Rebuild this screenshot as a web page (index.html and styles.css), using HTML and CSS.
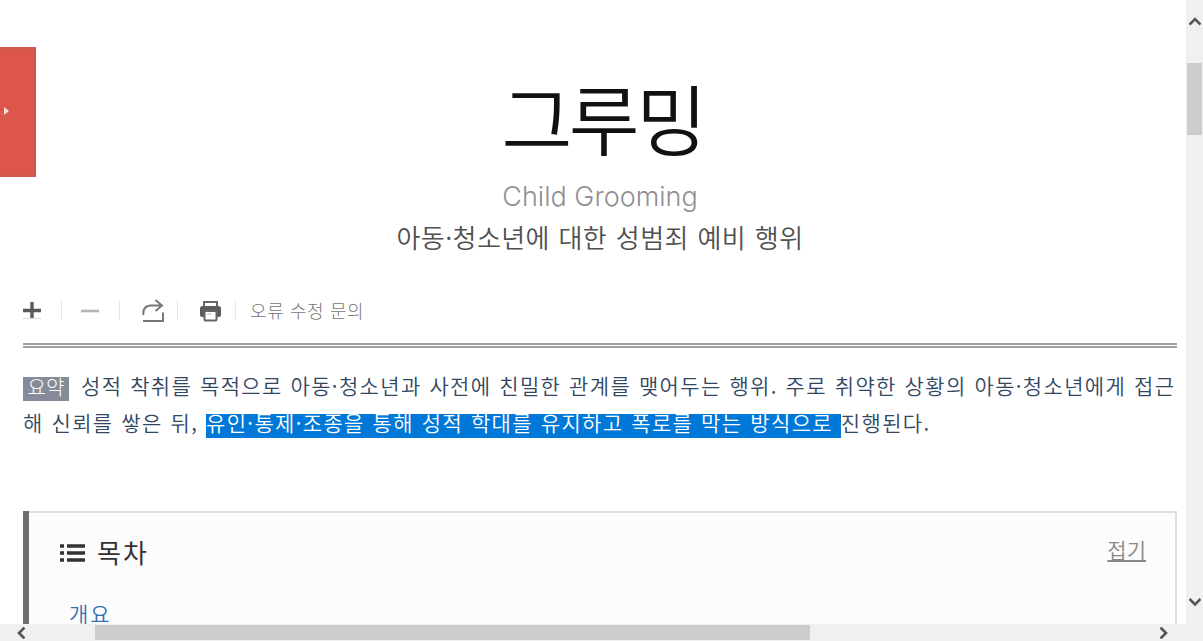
FILE: index.html
```html
<!DOCTYPE html>
<html lang="ko">
<head>
    <meta charset="UTF-8">
    <meta name="viewport" content="width=device-width, initial-scale=1.0">
    <title>그루밍</title>
    <link rel="stylesheet" href="styles.css">
</head>
<body>
    <div class="viewer">
        <main class="page">
            <button class="side-tab" aria-label="열기"></button>

            <header class="article-head">
                <h1>그루밍</h1>
                <p class="title-en">Child Grooming</p>
                <p class="title-sub">아동·청소년에 대한 성범죄 예비 행위</p>
            </header>

            <div class="toolbar">
                <span class="tool">
                    <svg width="18" height="18" viewBox="0 0 18 18"><path d="M9 0v16M0 8.500h18" stroke="#5a5a5a" stroke-width="3.4"/><path d="M0 16.500h18" stroke="#ddd"/></svg>
                </span>
                <span class="tool">
                    <svg width="18" height="18" viewBox="0 0 18 18"><path d="M0 9h18" stroke="#b5b5b5" stroke-width="2.6"/></svg>
                </span>
                <span class="tool tool-share">
                    <svg width="22" height="24" viewBox="0 0 22 24" fill="none" stroke="#777" stroke-width="2"><path d="M1.500 16C.5 10 4 6.500 9 6.500h11M13.500 1l6.500 5.500-6.500 5.500"/><path d="M1 22h20v-8.500"/></svg>
                </span>
                <span class="tool tool-print">
                    <svg width="21" height="22" viewBox="0 0 21 22"><path d="M4 7V2h13v5" fill="#fff" stroke="#666" stroke-width="2"/><rect y="6" width="21" height="11" rx="2.500" fill="#5c5c5c"/><rect x="4.500" y="11" width="12" height="9.500" rx="1" fill="#fff" stroke="#666" stroke-width="2"/><path d="M7 14h4" stroke="#bbb"/></svg>
                </span>
                <a class="report">오류 수정 문의</a>
            </div>

            <section class="summary">
                <div class="line"><span class="badge">요약</span><span class="text">성적 착취를 목적으로 아동·청소년과 사전에 친밀한 관계를 맺어두는 행위. 주로 취약한 상황의 아동·청소년에게 접근</span></div>
                <div class="line"><span class="text">해 신뢰를 쌓은 뒤, </span><mark>유인·통제·조종을 통해 성적 학대를 유지하고 폭로를 막는 방식으로 </mark><span class="text">진행된다.</span></div>
            </section>

            <nav class="toc">
                <div class="toc-head">
                    <svg width="25" height="19" viewBox="0 0 25 19"><path d="M0 2h4M0 9h4M0 16h4M7 2h18M7 9h18M7 16h18" stroke="#333" stroke-width="3.400"/></svg>
                    <h2>목차</h2>
                    <a class="fold">접기</a>
                </div>
                <a class="toc-item">개요</a>
            </nav>
        </main>

        <div class="vbar">
            <svg class="arrow-up" width="12" height="10" viewBox="0 0 12 10"><path d="M.5 8.500L6 3l5.500 5.500" fill="none" stroke="#555" stroke-width="2.600"/></svg>
            <div class="vthumb"></div>
            <svg class="arrow-down" width="12" height="10" viewBox="0 0 12 10"><path d="M.5 2L6 7.500 11.500 2" fill="none" stroke="#555" stroke-width="2.600"/></svg>
        </div>
        <div class="hbar">
            <svg class="arrow-left" width="10" height="12" viewBox="0 0 10 12"><path d="M8.500.5L3 6l5.500 5.500" fill="none" stroke="#555" stroke-width="2.600"/></svg>
            <div class="hthumb"></div>
            <svg class="arrow-right" width="10" height="12" viewBox="0 0 10 12"><path d="M1.500.5L7 6l-5.500 5.500" fill="none" stroke="#555" stroke-width="2.600"/></svg>
        </div>
    </div>
</body>
</html>
```
FILE: styles.css
```css
* {
    box-sizing: border-box;
}
body {
    margin: 0;
    overflow: hidden;
    background: #fff;
    font-family: "Noto Sans CJK KR", "Liberation Sans", sans-serif;
    font-weight: 350;
}
h1, h2, p {
    margin: 0;
}
.viewer {
    display: grid;
    grid-template-columns: 1186px 17px;
    grid-template-rows: 624px 17px;
    width: 1203px;
    height: 641px;
}
.page {
    position: relative;
    overflow: hidden;
    padding: 76px 9px 0 23px;
}

/* red tab fixed to the left edge */
.side-tab {
    position: absolute;
    left: 0;
    top: 47px;
    width: 36px;
    height: 130px;
    padding: 0 0 2px 4px;
    border: 2px solid #cb5850;
    border-left: 0;
    background: #dc564b;
}
.side-tab::before {
    content: "";
    display: block;
    border-left: 5px solid #fbdcd9;
    border-top: 4px solid transparent;
    border-bottom: 4px solid transparent;
    width: 0;
}

.article-head {
    height: 209px;
    text-align: center;
    white-space: nowrap;
}
h1 {
    height: 100px;
    padding-left: 5px;
    line-height: 82px;
    font-size: 77px;
    font-weight: 350;
    letter-spacing: -3.5px;
    color: #111;
}
.title-en {
    height: 41px;
    line-height: 41px;
    font-family: Inter, "Liberation Sans", sans-serif;
    font-size: 27px;
    font-weight: 300;
    color: #8f8f92;
}
.title-sub {
    height: 41px;
    line-height: 40px;
    font-size: 26px;
    letter-spacing: 0.4px;
    word-spacing: 1px;
    color: #505050;
}

.toolbar {
    display: flex;
    align-items: center;
    height: 50px;
}
.tool {
    display: flex;
    align-items: center;
    width: 58px;
    height: 20px;
}
.tool svg {
    margin-top: 2px;
}
.tool::after {
    content: "";
    width: 1px;
    height: 20px;
    margin-left: 20px;
    background: #e8e8e8;
}
.tool-share svg {
    margin-left: 3px;
}
.tool-share::after {
    margin-left: 13px;
}
.tool-print svg {
    margin-left: 3px;
}
.tool-print::after {
    margin-left: 14px;
}
.report {
    margin-left: -5px;
    font-size: 18px;
    font-weight: 300;
    letter-spacing: 0.6px;
    color: #777;
    white-space: nowrap;
}

.summary {
    height: 168px;
    margin-top: 8px;
    padding-top: 22px;
    border-top: 5px double #a0a0a0;
    color: #324763;
    font-size: 21px;
    letter-spacing: 1.35px;
    word-spacing: 0.6px;
}
.line {
    display: flex;
    align-items: center;
    height: 37px;
    white-space: pre;
}
.badge {
    flex: none;
    width: 46px;
    height: 24px;
    margin-right: 12px;
    background: #868b99;
    color: #fff;
    font-size: 20px;
    font-weight: 300;
    letter-spacing: 0;
    line-height: 20px;
    text-align: center;
}
.text {
    padding-bottom: 8px;
}
mark {
    height: 24px;
    line-height: 16px;
    background: #0078d7;
    color: #fff;
}

.toc {
    height: 200px;
    margin-left: 6px;
    border: 2px solid #dcdfdf;
    border-left: 0;
    box-shadow: -6px 0 0 #6e6e6e;
    background: #fcfcfc;
    padding: 20px 29px 0 31px;
}
.toc-head {
    display: flex;
    align-items: center;
    height: 40px;
}
h2 {
    margin-left: 12px;
    padding-bottom: 4px;
    font-size: 26px;
    font-weight: 400;
    letter-spacing: 2px;
    color: #333;
}
.fold {
    margin-left: auto;
    padding-bottom: 8px;
    font-size: 21px;
    color: #888;
    text-decoration: underline;
}
.toc-item {
    display: block;
    margin: 25px 0 0 9px;
    font-size: 21px;
    letter-spacing: 2px;
    color: #3470b0;
}

.vbar, .hbar {
    display: flex;
    background: #f0f0f0;
}
.vbar {
    flex-direction: column;
    align-items: center;
}
.vthumb {
    width: 15px;
    height: 72px;
    margin-top: 37px;
    background: #cdcdcd;
}
.arrow-up {
    margin-top: 16px;
}
.arrow-down {
    margin-top: auto;
    margin-bottom: 17px;
}
.hbar {
    grid-column: 1 / 3;
    align-items: center;
}
.hthumb {
    width: 715px;
    height: 15px;
    margin-left: 69px;
    background: #cdcdcd;
}
.arrow-left {
    margin-left: 16px;
}
.arrow-right {
    margin-left: auto;
    margin-right: 34px;
}
```
